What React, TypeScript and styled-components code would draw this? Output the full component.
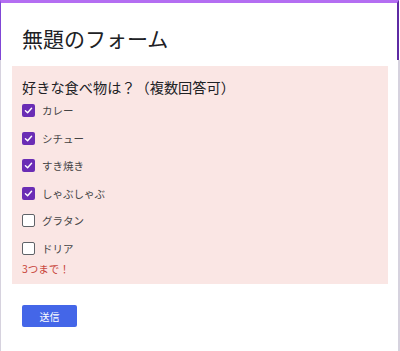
import React, { useState } from 'react';
import styled, { createGlobalStyle } from 'styled-components';

const GlobalStyle = createGlobalStyle`
	html, body {
		margin: 0;
		padding: 0;
		background: #ffffff;
	}
	body {
		font-family: "Noto Sans CJK JP", "Noto Sans", sans-serif;
	}
`;

const foods = ['カレー', 'シチュー', 'すき焼き', 'しゃぶしゃぶ', 'グラタン', 'ドリア'];

export default function App() {
	const [checked, setChecked] = useState<string[]>(['カレー', 'シチュー', 'すき焼き', 'しゃぶしゃぶ']);

	const toggle = (food: string) => {
		setChecked(prev => prev.includes(food) ? prev.filter(f => f !== food) : [...prev, food]);
	};

	return (
		<>
			<GlobalStyle />
			<Card>
				<Header>
					<Title>無題のフォーム</Title>
				</Header>
				<Body>
					<Question>
						<QuestionText>好きな食べ物は？（複数回答可）</QuestionText>
						<Options>
							{foods.map(food => (
								<Option key={food} onClick={() => toggle(food)}>
									<Box $checked={checked.includes(food)}>
										{checked.includes(food) && (
											<svg width="9" height="9" viewBox="0 0 10 10">
												<path d="M1.6 5.2 L4 7.4 L8.4 2.6" fill="none" stroke="#fff" strokeWidth="1.6" strokeLinecap="round" strokeLinejoin="round" />
											</svg>
										)}
									</Box>
									<Label>{food}</Label>
								</Option>
							))}
						</Options>
						<ErrorText>3つまで！</ErrorText>
					</Question>
					<SubmitButton type="button">送信</SubmitButton>
				</Body>
			</Card>
		</>
	);
}

const Card = styled.div`
	width: 400px;
	height: 351px;
	box-sizing: border-box;
	display: flex;
	flex-direction: column;
	background: #ffffff;
`;

const Header = styled.div`
	height: 60px;
	box-sizing: border-box;
	border-top: 3px solid #b46ef2;
	border-left: 1px solid #8046d6;
	border-right: 2px solid #5e2ba3;
	margin-right: 1px;
	padding: 23px 0 0 21px;
`;

const Title = styled.h1`
	margin: 0;
	font-size: 21px;
	line-height: 25px;
	font-weight: 400;
	color: #202124;
`;

const Body = styled.div`
	flex: 1;
	box-sizing: border-box;
	border-left: 1px solid #d6d2de;
	border-right: 2px solid #d6d2de;
	padding: 6px 10px 0 11px;
	display: flex;
	flex-direction: column;
	align-items: flex-start;
`;

const Question = styled.div`
	align-self: stretch;
	background: #fae6e4;
	padding: 12px 10px 8px 10px;
`;

const QuestionText = styled.div`
	font-size: 14.2px;
	line-height: 19px;
	color: #202124;
`;

const Options = styled.div`
	display: flex;
	flex-direction: column;
`;

const Option = styled.label`
	height: 27.5px;
	display: flex;
	align-items: center;
	gap: 7px;
	cursor: pointer;
`;

const Box = styled.span<{ $checked: boolean }>`
	width: 13px;
	height: 13px;
	box-sizing: border-box;
	border-radius: 2px;
	display: flex;
	align-items: center;
	justify-content: center;
	background: ${p => p.$checked ? '#6a2db5' : '#ffffff'};
	border: ${p => p.$checked ? 'none' : '1.5px solid #5f6368'};
`;

const Label = styled.span`
	font-size: 10.5px;
	color: #444444;
`;

const ErrorText = styled.div`
	font-size: 10.5px;
	line-height: 14px;
	color: #c9463d;
`;

const SubmitButton = styled.button`
	margin: 21px 0 0 10px;
	width: 55px;
	height: 22px;
	border: none;
	border-radius: 2px;
	background: #4466e8;
	color: #ffffff;
	font-family: inherit;
	font-size: 10px;
	padding: 0;
	cursor: pointer;
`;
